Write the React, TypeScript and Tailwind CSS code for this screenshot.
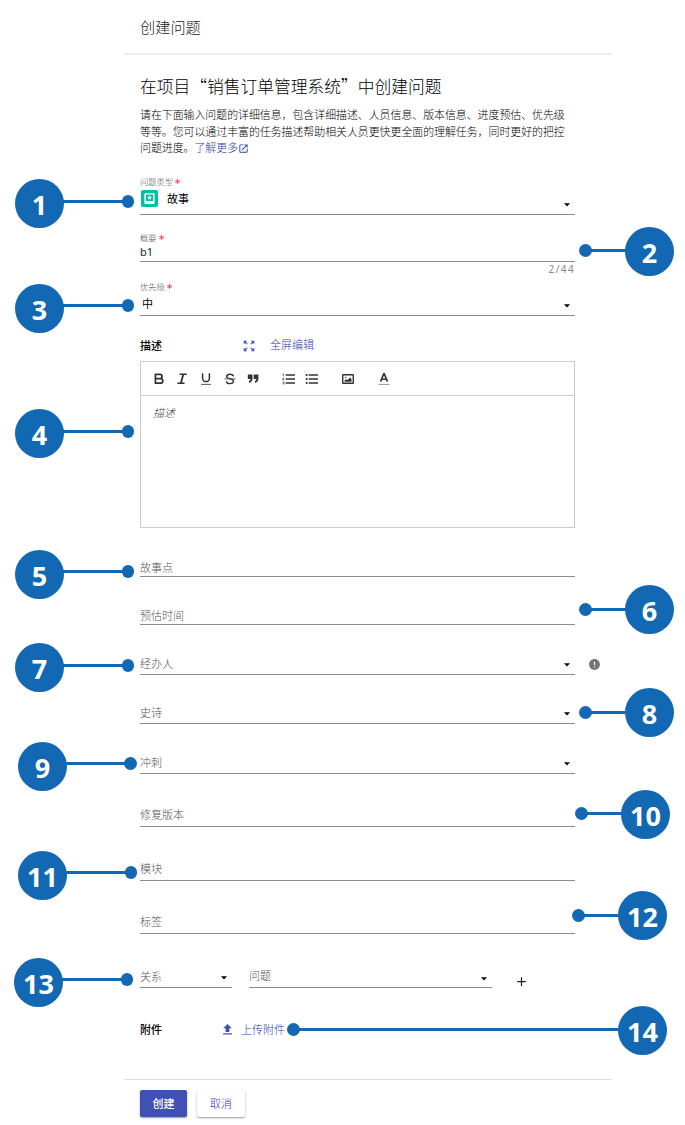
import React from "react";
import {
  MdAdd,
  MdError,
  MdFormatListBulleted,
  MdFormatListNumbered,
  MdOpenInNew,
  MdUpload,
  MdZoomOutMap,
} from "react-icons/md";

function Caret({ className = "" }: { className?: string }) {
  return (
    <svg viewBox="0 0 6 4" className={`h-[4px] w-[6px] shrink-0 ${className}`}>
      <path d="M0 .3h6L3 3.6z" fill="#000" />
    </svg>
  );
}

function StoryIcon() {
  return (
    <svg viewBox="0 0 17 17" className="h-[17px] w-[17px] shrink-0">
      <rect width="17" height="17" rx="2" fill="#00bfa5" />
      <path
        fillRule="evenodd"
        fill="#fff"
        d="M4.1 3.2h8.8q.7 0 .7.7v9.4q0 .7-.7.7H4.1q-.7 0-.7-.7V3.9q0-.7.7-.7zM4.9 4.6v6.3h7.2V4.6z"
      />
      <path
        fill="#fff"
        d="m8.5 5.1.75 1.6 1.75.15-1.35 1.15.45 1.7-1.6-.9-1.6.9.45-1.7L6 6.850l1.750-.15z"
      />
    </svg>
  );
}

function Glyph({ children }: { children: React.ReactNode }) {
  return (
    <svg viewBox="0 0 12 12" className="h-[12px] w-[12px]" fill="none" stroke="#333">
      {children}
    </svg>
  );
}

function BoldIcon() {
  return (
    <Glyph>
      <path
        d="M2.4 1.3h4.5a2.1 2.1 0 0 1 0 4.3H2.4zM2.4 5.6h5.1a2.3 2.3 0 0 1 0 4.6H2.4z"
        strokeWidth="1.7"
        strokeLinejoin="round"
      />
    </Glyph>
  );
}

function ItalicIcon() {
  return (
    <Glyph>
      <path d="M3.6 1.2h7.2M1.4 10.2h7.2" strokeWidth="1.5" />
      <path d="M7.3 1.2 4.9 10.2" strokeWidth="1.8" />
    </Glyph>
  );
}

function UnderlineIcon() {
  return (
    <Glyph>
      <path d="M2.6.3v4.9a3.4 3.4 0 0 0 6.8 0V.3" strokeWidth="1.5" />
      <path d="M1 11.4h10" strokeWidth="1.1" stroke="#666" />
    </Glyph>
  );
}

function StrikeIcon() {
  return (
    <Glyph>
      <path
        d="M9.5 3.4Q9 1.3 6 1.3T2.6 3.5Q2.6 5 6 5.8t3.5 2.5Q9.3 10.6 6 10.6T2.4 8.3"
        strokeWidth="1.4"
      />
      <path d="M.4 5.9h11.2" strokeWidth="1" stroke="#666" />
    </Glyph>
  );
}

function QuoteIcon() {
  return (
    <Glyph>
      <path
        d="M.8 1.4h4.7v4.4Q5.5 8.900 2 9.900V8Q3.500 7.400 3.500 6H.8zM6.700 1.400h4.700v4.400q0 3.100-3.500 4.100V8q1.500-.6 1.500-2H6.700z"
        fill="#333"
        stroke="none"
      />
    </Glyph>
  );
}

function ImageIcon() {
  return (
    <svg viewBox="0 0 12 10" className="h-[10px] w-[12px]">
      <rect x=".7" y=".7" width="10.6" height="8.6" rx=".5" fill="none" stroke="#333" strokeWidth="1.4" />
      <path d="M2.6 7.8V6.2l1.6-1 1.4.7L8 3.6l1.500 1.500v2.700z" fill="#333" />
      <circle cx="3.700" cy="3.400" r=".7" fill="#333" />
    </svg>
  );
}

function ColorIcon() {
  return (
    <Glyph>
      <path d="M2.6 8.6 5.700.9h.6l3.100 7.700M3.700 6.200h4.600" strokeWidth="1.600" />
      <path d="M.5 11.400h11" stroke="#999" strokeWidth="1" />
    </Glyph>
  );
}

function Tool({ children, className = "" }: { children: React.ReactNode; className?: string }) {
  return (
    <button className={`flex h-[18px] w-[23.6px] shrink-0 items-center justify-center text-[16px] text-[#333] ${className}`}>
      {children}
    </button>
  );
}

function Required({ children }: { children: string }) {
  return (
    <div className="flex items-center gap-[2px] text-[8.3px] leading-[9px] text-[#555]">
      {children}
      <svg viewBox="0 0 5 5" className="h-[5px] w-[5px]">
        <path d="M2.5 .2v4.600M.3 1.300l4.400 2.400M.3 3.700l4.400-2.400" stroke="#ee4a4a" strokeWidth="1" />
      </svg>
    </div>
  );
}

type LineField = { label: string; size: string; select?: boolean; info?: boolean };

const fields: LineField[] = [
  { label: "故事点", size: "h-[49px] pb-[3px]" },
  { label: "预估时间", size: "h-[48px] pb-[3px]" },
  { label: "经办人", size: "h-[50px] pb-[5px]", select: true, info: true },
  { label: "史诗", size: "h-[49px] pb-[5px]", select: true },
  { label: "冲刺", size: "h-[50px] pb-[5px]", select: true },
  { label: "修复版本", size: "h-[53px] pb-[6px]" },
  { label: "模块", size: "h-[54px] pb-[6px]" },
  { label: "标签", size: "h-[53px] pb-[6px]" },
];

function Field({ label, size, select, info }: LineField) {
  return (
    <div className={`relative flex items-end justify-between border-b border-[#8c8c8c] ${size}`}>
      <span className="text-[11px] leading-[12px] text-[#555]">{label}</span>
      {select && <Caret className="mr-[5px] mb-[2px]" />}
      {info && <MdError className="absolute -right-[26px] bottom-[3px] text-[13px] text-[#757575]" />}
    </div>
  );
}

/* [number, circle x, circle y, dot x, dot y] */
const callouts = [
  [1, 39.5, 203.5, 128, 201.5],
  [2, 649.5, 251, 585.5, 250.5],
  [3, 39.5, 308, 128, 305.5],
  [4, 39.5, 433.5, 128, 431.5],
  [5, 39.5, 574.5, 128, 571.5],
  [6, 649.5, 609.5, 585.5, 609.5],
  [7, 39.5, 667.5, 128, 665.5],
  [8, 649.5, 712.5, 585.5, 712.5],
  [9, 42.5, 766.5, 130.5, 763.5],
  [10, 645.5, 814.5, 581.5, 813.5],
  [11, 42.5, 875.5, 131, 872.5],
  [12, 642.5, 915.5, 578.5, 915.5],
  [13, 38.5, 982.5, 127, 979.5],
  [14, 642.5, 1030.5, 293.5, 1029.5],
];

function Callout({ spec }: { spec: number[] }) {
  const [n, cx, cy, dx, dy] = spec;
  return (
    <>
      <div
        className="absolute h-[3px] bg-[#1268b3]"
        style={{ left: Math.min(cx, dx), width: Math.abs(cx - dx), top: dy - 1.5 }}
      />
      <div
        className="absolute h-[12.5px] w-[12.5px] rounded-full bg-[#1268b3]"
        style={{ left: dx - 6.25, top: dy - 6.25 }}
      />
      <div
        className="absolute flex h-[49px] w-[49px] items-center justify-center rounded-full bg-[#1268b3] pt-[2px] font-['Open_Sans',sans-serif] text-[27px] leading-none font-bold text-white"
        style={{ left: cx - 24.5, top: cy - 24.5 }}
      >
        {n}
      </div>
    </>
  );
}

export default function App() {
  return (
    <div
      lang="zh-CN"
      className="relative h-[1125px] w-[685px] overflow-hidden bg-white font-['Noto_Sans_CJK_SC',sans-serif] text-[11px] font-light text-[#222]"
    >
      <div className="ml-[124px] w-[488px]">
        <header className="flex h-[55px] items-center border-b-2 border-[#eee] px-4 text-[15.2px] leading-none text-[#222]">
          创建问题
        </header>
        <main className="h-[1024px] pr-[37px] pl-4">
          <h1 className="pt-[21px] text-[16.75px] leading-[20px] whitespace-nowrap text-black">
            在项目“销售订单管理系统”中创建问题
          </h1>
          <p className="mt-[10px] h-[51px] text-[10.9px] leading-[16.6px] whitespace-nowrap text-black">
            {"请在下面输入问题的详细信息\uff0c包含详细描述、人员信息、版本信息、进度预估、优先级"}
            <br />
            {"等等。您可以通过丰富的任务描述帮助相关人员更快更全面的理解任务\uff0c同时更好的把控"}
            <br />
            问题进度。
            <a className="text-[#3040b0]">
              了解更多
              <MdOpenInNew className="inline-block align-[-2px] text-[11px]" />
            </a>
          </p>

          <div className="flex h-[58px] flex-col justify-end border-b border-[#8c8c8c] pb-[6px]">
            <Required>问题类型</Required>
            <div className="mt-[3px] flex h-[19px] items-center">
              <div className="ml-[1px]">
                <StoryIcon />
              </div>
              <span className="ml-[9px] leading-none font-normal text-black">故事</span>
              <Caret className="mt-[12px] mr-[5px] ml-auto" />
            </div>
          </div>
          <div className="flex h-[47px] flex-col justify-end border-b border-[#8c8c8c] pb-[3px]">
            <Required>概要</Required>
            <span className="mt-[4px] font-['Noto_Sans',sans-serif] text-[11px] leading-[12px] font-normal text-[#222]">b1</span>
          </div>
          <div className="h-[14px] pt-[1px] text-right font-['Noto_Sans',sans-serif] text-[10px] leading-[12px] font-normal tracking-[1.4px] text-[#888]">
            2/44
          </div>
          <div className="flex h-[40px] flex-col justify-end border-b border-[#8c8c8c] pb-[5px]">
            <Required>优先级</Required>
            <div className="mt-[5px] flex h-[14px] items-center">
              <span className="ml-[2px] leading-none font-normal text-black">中</span>
              <Caret className="mt-[6px] mr-[5px] ml-auto" />
            </div>
          </div>

          <div className="flex h-[45px] items-center pt-[14px] leading-none">
            <span className="w-[102px] font-medium text-black">描述</span>
            <MdZoomOutMap className="text-[14px] text-[#3f51b5]" />
            <span className="-mt-[2px] ml-[14px] text-[#3040b0]">全屏编辑</span>
          </div>
          <div className="h-[167px] border border-[#ccc]">
            <div className="flex h-[34px] items-center border-b border-[#ccc] pl-[6px]">
              <Tool><BoldIcon /></Tool>
              <Tool><ItalicIcon /></Tool>
              <Tool><UnderlineIcon /></Tool>
              <Tool><StrikeIcon /></Tool>
              <Tool><QuoteIcon /></Tool>
              <Tool className="ml-[12px]"><MdFormatListNumbered /></Tool>
              <Tool><MdFormatListBulleted /></Tool>
              <Tool className="ml-[12px]"><ImageIcon /></Tool>
              <Tool className="ml-[12px]"><ColorIcon /></Tool>
            </div>
            <div className="px-[12px] pt-[9px] leading-[14px] text-[#444] italic">描述</div>
          </div>

          {fields.map((f) => (
            <Field key={f.label} {...f} />
          ))}

          <div className="flex h-[54px] items-end">
            <div className="flex w-[92px] items-end justify-between border-b border-[#8c8c8c] pb-[5px]">
              <span className="leading-[12px] text-[#555]">关系</span>
              <Caret className="mr-[5px] mb-[2px]" />
            </div>
            <div className="ml-[17px] flex w-[243px] items-end justify-between border-b border-[#8c8c8c] pb-[4px]">
              <span className="mb-[2px] leading-[12px] text-[#555]">问题</span>
              <Caret className="mr-[5px] mb-[2px]" />
            </div>
            <MdAdd className="-mb-px ml-[22px] text-[15px] text-[#222]" />
          </div>

          <div className="mt-[33px] flex h-[16px] items-center leading-none">
            <span className="w-[80px] font-medium text-black">附件</span>
            <MdUpload className="text-[15px] text-[#3f51b5]" />
            <span className="ml-[6px] text-[#3040b0]">上传附件</span>
          </div>
        </main>
        <footer className="flex gap-[10px] border-t border-[#ddd] px-4 pt-[10px]">
          <button className="h-[27px] w-[47px] rounded-[2px] bg-[#3f51b5] leading-none font-medium text-white shadow-[0_1px_2px_rgba(0,0,0,0.4)]">
            创建
          </button>
          <button className="h-[27px] w-[48px] rounded-[2px] bg-white leading-none text-[#3040b0] shadow-[0_1px_2px_rgba(0,0,0,0.4)]">
            取消
          </button>
        </footer>
      </div>
      {callouts.map((c) => (
        <Callout key={c[0]} spec={c} />
      ))}
    </div>
  );
}
